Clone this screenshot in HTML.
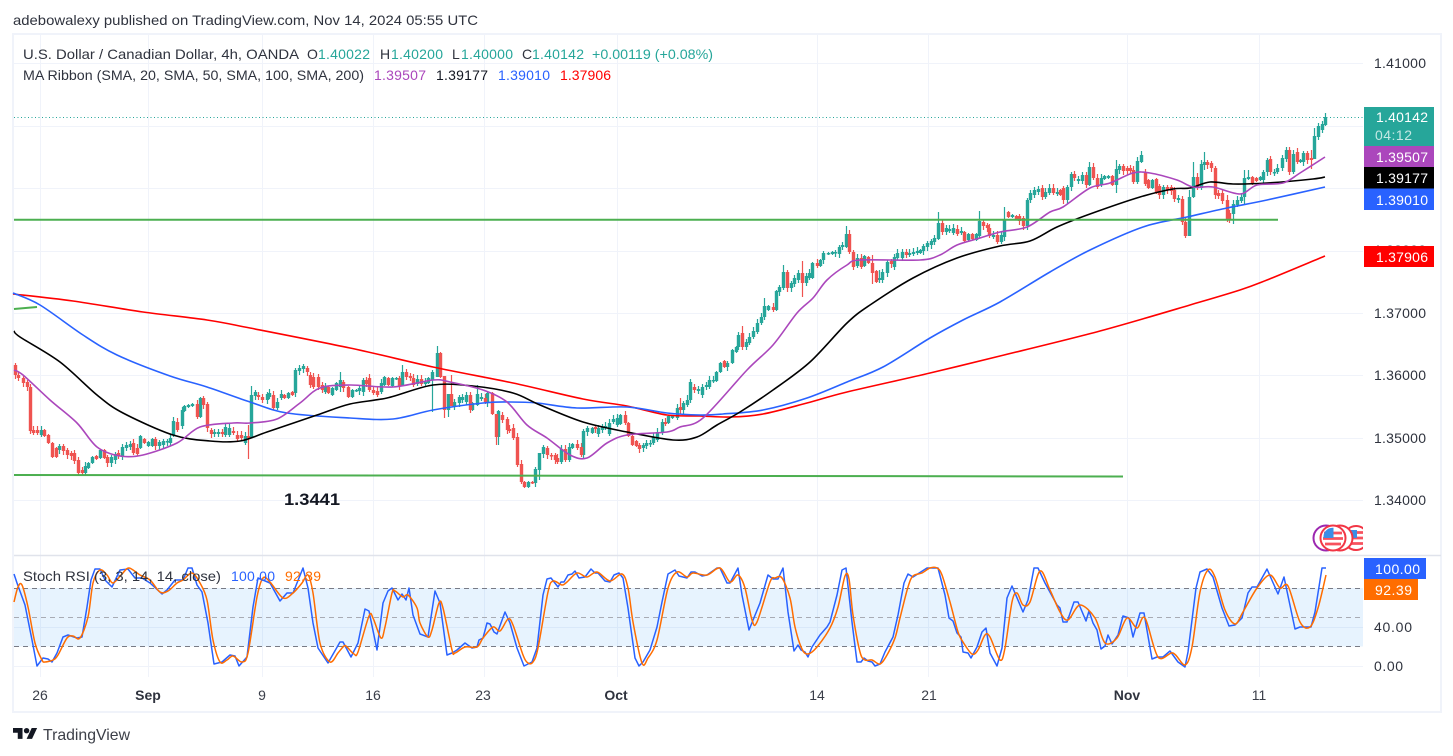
<!DOCTYPE html>
<html><head><meta charset="utf-8"><title>USD/CAD chart</title>
<style>
html,body{margin:0;padding:0;background:#fff;width:1453px;height:756px;overflow:hidden}
svg{display:block;font-family:"Liberation Sans",Arial,sans-serif}
text{font-size:14px;fill:#2f333e}
.w{fill:#fff}
.ax{fill:#3a3e49;text-anchor:middle}
.ma{fill:none;stroke-width:1.6;stroke-linejoin:round}
.st{fill:none;stroke-width:1.5;stroke-linejoin:round}
</style></head><body>
<svg id="c" width="1453" height="756" viewBox="0 0 1453 756" xmlns="http://www.w3.org/2000/svg">
<defs><clipPath id="fc"><rect x="1300" y="520" width="63" height="35"/></clipPath></defs>
<rect width="1453" height="756" fill="#fff"/>
<text x="13" y="25" textLength="465" lengthAdjust="spacingAndGlyphs">adebowalexy published on TradingView.com, Nov 14, 2024 05:55 UTC</text>
<!-- frame -->
<rect x="13" y="34" width="1428" height="678" fill="none" stroke="#f0f3fa" stroke-width="2"/>
<!-- grid -->
<path d="M14 63.5H1363M14 126.5H1363M14 188.5H1363M14 251.5H1363M14 313.5H1363M14 375.5H1363M14 438.5H1363M14 500.5H1363M14 627.5H1363M14 666.5H1363M40.5 35V677M148.5 35V677M262.5 35V677M373.5 35V677M484.5 35V677M617.5 35V677M817.5 35V677M928.5 35V677M1127.5 35V677M1259.5 35V677" stroke="#f0f3fa" fill="none"/>
<path d="M14 555.5H1441" stroke="#e0e3eb" stroke-width="1.5"/>
<!-- stoch band -->
<rect x="14" y="588" width="1349" height="58.5" fill="#2196f3" fill-opacity=".11"/>
<path d="M14 588.5H1363M14 646.5H1363" stroke="#787b86" stroke-dasharray="5 4" fill="none"/>
<path d="M14 617.5H1363" stroke="#a8abb4" stroke-dasharray="5 4" fill="none"/>
<!-- candles -->
<g id="candles"></g>
<!-- MAs -->
<polyline class="ma sm" stroke="#ff0000" points="13,294 73,301 143,312 207,320 250,328 350,348 433,367 513,383 583,399 627,406 667,415 700,416 730,417 763,414 807,403 847,392 930,373 1000,356 1100,331 1190,305 1240,290 1267,280 1325,256"/>
<polyline class="ma sm" stroke="#2962ff" points="13,293 40,305 83,335 117,355 170,376 207,387 250,402 287,413 350,418 393,419 433,410 483,403 510,402 537,403 577,408 627,407 667,413 700,415 723,414 763,410 807,398 847,382 883,367 930,338 963,320 1000,302 1050,272 1090,250 1143,227 1187,217 1227,208 1267,200 1325,187"/>
<polyline class="ma sm" stroke="#000" points="14,331 20,337 60,362 97,395 123,413 173,435 210,441 240,441 267,432 317,415 350,404 387,398 433,385 473,386 513,393 540,405 583,422 627,432 673,440 697,437 717,425 740,412 773,390 810,362 847,323 870,305 913,278 957,258 1000,246 1030,241 1057,227 1090,214 1140,197 1173,189 1190,188 1210,182 1233,184 1267,183 1313,179 1325,177"/>
<polyline class="ma sm" stroke="#ab47bc" points="14,370 23,375 50,400 77,423 97,447 120,456 143,455 177,443 200,427 233,423 250,423 277,419 300,403 320,388 350,385 393,387 433,380 450,382 483,390 507,402 527,425 547,438 570,455 587,458 607,443 627,435 667,432 680,427 703,418 747,370 773,345 797,313 813,298 827,280 847,265 860,260 920,260 940,255 957,245 980,238 1000,232 1027,227 1050,212 1063,207 1090,188 1110,183 1133,173 1150,173 1177,180 1193,187 1213,187 1240,194 1257,185 1283,183 1300,173 1325,157"/>
<!-- trend lines -->
<path d="M14 219.7H1278M14 475L1123 476.5M14 309L37 307" stroke="#4caf50" stroke-width="2" fill="none"/>
<path d="M14 117.5H1363" stroke="#26a69a" stroke-dasharray="1 2.5" fill="none"/>
<text x="284" y="505" textLength="56" lengthAdjust="spacingAndGlyphs" style="font-size:17px;font-weight:bold;fill:#131722">1.3441</text>
<!-- stoch lines -->
<polyline class="st" stroke="#2962ff" points="14,574 17,583 25,605 32,640 37,666 43,658 48,659 52,662 57,653 63,637 68,635 77,638 82,637 87,607 91,580 95,569 100,569 105,580 112,587 120,570 128,569 135,578 142,578 150,583 162,594 167,590 175,580 183,580 188,568 192,568 197,585 202,592 208,623 214,664 222,662 230,655 235,656 239,666 247,657 253,607 258,578 270,583 280,601 287,593 293,593 303,568 308,588 313,623 318,648 328,663 340,642 343,642 351,657 358,643 365,609 369,611 377,650 383,603 388,591 392,588 398,600 402,594 406,600 409,588 413,615 420,634 428,637 435,591 440,603 447,655 452,653 457,650 465,643 472,648 477,647 479,640 483,638 487,623 490,624 494,632 497,634 505,612 510,623 517,648 524,666 532,662 537,648 543,595 547,579 551,578 558,587 561,582 564,582 568,575 572,574 575,571 579,578 585,577 591,569 595,573 598,573 605,581 610,582 614,575 619,573 623,578 628,608 635,658 639,666 643,662 650,650 657,627 662,602 668,574 675,570 679,576 687,578 691,572 695,572 702,576 707,575 717,568 720,568 727,583 730,583 738,568 742,595 749,630 760,603 768,575 773,579 778,579 783,568 788,612 794,651 798,645 801,650 805,652 808,657 812,647 820,635 827,627 830,622 837,595 842,570 846,568 852,622 857,662 861,662 864,658 868,661 872,662 875,666 880,664 885,652 893,637 898,615 904,583 908,574 913,577 927,568 938,568 945,595 949,618 953,621 957,633 961,637 963,652 968,653 971,658 977,647 982,632 986,628 990,653 997,666 1002,648 1007,598 1012,586 1023,612 1028,600 1034,568 1038,568 1045,583 1057,605 1060,608 1063,622 1067,622 1074,602 1078,602 1086,621 1089,611 1093,623 1097,630 1101,649 1105,646 1108,635 1112,644 1118,635 1123,616 1129,618 1133,637 1140,613 1144,613 1152,659 1157,657 1163,657 1170,651 1178,662 1185,667 1188,652 1196,588 1200,572 1207,569 1213,577 1222,608 1229,626 1235,625 1242,618 1248,593 1252,587 1257,587 1267,569 1278,594 1284,577 1295,629 1300,627 1311,627 1315,612 1322,568 1326,568"/>
<polyline class="st sm" stroke="#ff6d00" points="14,602 18,587 22,585 28,607 35,643 42,660 45,662 53,660 58,655 67,638 73,636 80,638 88,617 93,583 100,570 107,575 113,583 122,574 129,568 140,575 150,580 160,592 168,591 177,583 183,580 192,573 200,583 207,600 213,640 220,662 227,660 233,656 242,662 248,653 257,597 263,578 270,582 283,598 293,593 302,583 308,575 313,593 320,643 330,662 338,653 344,646 347,647 354,654 358,652 369,616 373,618 381,638 385,627 392,593 395,591 403,597 408,595 417,608 420,623 428,637 432,630 439,603 443,608 452,650 455,653 465,647 477,647 483,638 493,627 500,631 508,619 513,625 523,655 528,663 533,662 538,648 548,592 553,581 562,585 567,582 577,573 587,577 597,572 610,581 622,574 628,588 633,622 642,663 648,658 657,640 668,588 677,572 687,577 693,573 707,575 720,568 730,582 738,575 745,588 752,620 757,622 770,582 775,578 782,578 790,598 795,627 802,649 808,654 817,647 830,628 838,607 845,576 849,579 853,615 860,652 865,660 872,660 880,664 887,655 895,638 900,618 908,587 913,576 922,573 930,568 937,568 942,575 950,602 958,632 963,642 972,654 978,650 985,635 990,637 1000,660 1005,648 1012,602 1017,593 1023,605 1030,602 1040,571 1050,590 1060,612 1068,620 1080,605 1095,618 1105,643 1117,638 1127,618 1137,628 1145,618 1158,657 1173,653 1185,665 1192,647 1200,592 1208,570 1215,577 1225,610 1235,624 1243,612 1257,588 1270,575 1280,588 1288,586 1300,622 1310,627 1318,608 1326,575"/>
<!-- legends -->
<text x="23" y="59" textLength="276" lengthAdjust="spacingAndGlyphs">U.S. Dollar / Canadian Dollar, 4h, OANDA</text>
<text x="307" y="59">O</text><text x="318" y="59" textLength="52" style="fill:#26a69a">1.40022</text>
<text x="380" y="59">H</text><text x="391" y="59" textLength="52" style="fill:#26a69a">1.40200</text>
<text x="452" y="59">L</text><text x="461" y="59" textLength="52" style="fill:#26a69a">1.40000</text>
<text x="522" y="59">C</text><text x="532" y="59" textLength="52" style="fill:#26a69a">1.40142</text>
<text x="592" y="59" textLength="121" lengthAdjust="spacingAndGlyphs" style="fill:#26a69a">+0.00119 (+0.08%)</text>
<text x="23" y="80" textLength="341" lengthAdjust="spacingAndGlyphs">MA Ribbon (SMA, 20, SMA, 50, SMA, 100, SMA, 200)</text>
<text x="374" y="80" textLength="52" style="fill:#ab47bc">1.39507</text>
<text x="436" y="80" textLength="52" style="fill:#131722">1.39177</text>
<text x="498" y="80" textLength="52" style="fill:#2962ff">1.39010</text>
<text x="560" y="80" textLength="51" style="fill:#ff0000">1.37906</text>
<text x="23" y="581" textLength="198" lengthAdjust="spacingAndGlyphs">Stoch RSI (3, 3, 14, 14, close)</text>
<text x="231" y="581" textLength="44" style="fill:#2962ff">100.00</text>
<text x="285" y="581" textLength="36" style="fill:#ff6d00">92.39</text>
<!-- axis -->
<g class="axr">
<text x="1374" y="68" textLength="52">1.41000</text>
<text x="1374" y="131" textLength="52">1.40000</text>
<text x="1374" y="193" textLength="52">1.39000</text>
<text x="1374" y="255" textLength="52">1.38000</text>
<text x="1374" y="318" textLength="52">1.37000</text>
<text x="1374" y="380" textLength="52">1.36000</text>
<text x="1374" y="443" textLength="52">1.35000</text>
<text x="1374" y="505" textLength="52">1.34000</text>
<text x="1374" y="632" textLength="38">40.00</text>
<text x="1374" y="671" textLength="29">0.00</text>
</g>
<rect x="1364" y="107" width="70" height="39" fill="#26a69a"/>
<text class="w" x="1376" y="122" textLength="52" style="fill:#fff">1.40142</text>
<text x="1375" y="140" textLength="37" style="fill:#c4e8e4">04:12</text>
<rect x="1364" y="146" width="70" height="21" fill="#ab47bc"/>
<text x="1376" y="162" textLength="52" style="fill:#fff">1.39507</text>
<rect x="1364" y="167" width="70" height="21.5" fill="#000"/>
<text x="1376" y="183" textLength="52" style="fill:#fff">1.39177</text>
<rect x="1364" y="188.5" width="70" height="21.5" fill="#2962ff"/>
<text x="1376" y="205" textLength="52" style="fill:#fff">1.39010</text>
<rect x="1364" y="246" width="70" height="21" fill="#ff0000"/>
<text x="1376" y="262" textLength="52" style="fill:#fff">1.37906</text>
<rect x="1364" y="558" width="62" height="21" fill="#2962ff"/>
<text x="1375" y="574" textLength="45" style="fill:#fff">100.00</text>
<rect x="1364" y="579" width="54" height="21" fill="#ff6d00"/>
<text x="1375" y="595" textLength="37" style="fill:#fff">92.39</text>
<g class="tm">
<text class="ax" x="40" y="700">26</text>
<text class="ax" x="148" y="700" style="font-weight:bold;fill:#2f333e">Sep</text>
<text class="ax" x="262" y="700">9</text>
<text class="ax" x="373" y="700">16</text>
<text class="ax" x="483" y="700">23</text>
<text class="ax" x="616" y="700" style="font-weight:bold;fill:#2f333e">Oct</text>
<text class="ax" x="817" y="700">14</text>
<text class="ax" x="929" y="700">21</text>
<text class="ax" x="1127" y="700" style="font-weight:bold;fill:#2f333e">Nov</text>
<text class="ax" x="1259" y="700">11</text>
</g>
<!-- flags -->
<g clip-path="url(#fc)">
<circle cx="1326" cy="538" r="12.5" fill="#fff" stroke="#9c27b0" stroke-width="2"/>
<circle cx="1356" cy="538" r="12" fill="#fff" stroke="#f23645" stroke-width="2"/>
<path d="M1346 532.5h20M1346 538h20M1346 543.5h20" stroke="#f7525f" stroke-width="2.8"/>
<rect x="1350" y="530" width="7" height="8" fill="#3a8ee6"/>
<circle cx="1340" cy="538" r="12.5" fill="#fff" stroke="#f23645" stroke-width="2"/>
<circle cx="1333" cy="538" r="12.5" fill="#fff" stroke="#f23645" stroke-width="2"/>
<path d="M1324 533h18M1323 538.5h20M1325 544h16" stroke="#f7525f" stroke-width="2.8"/>
<path d="M1325.5 531a10 10 0 0 1 8-3.2V538h-10a10 10 0 0 1 2-7z" fill="#3a8ee6"/>
</g>
<!-- logo -->
<g transform="translate(13 723.9) scale(.68)" fill="#131722"><path d="M14 6H0v7h7v9h7V6zM28 22h-8l7.5-16h8L28 22z"/><circle cx="20" cy="10" r="4"/></g>
<text x="43" y="740" textLength="87" lengthAdjust="spacingAndGlyphs" style="font-size:16px;fill:#3d4049">TradingView</text>
</svg>
<script>
var d="r15 365 375,r18 375 378,r23 378 383,r27 382 387,r30 387 431,r33 430 433,r37 430 433,g41 430 435,r44 430 436,r48 435 443,r52 443 457,r56 448 457,g59 446 450,r63 446 451,r67 450 455,r71 453 456,r74 453 461,r78 460 473,r82 470 473,g85 466 473,g88 463 468,g92 457 463,r96 456 459,g100 450 458,r104 450 458,r107 457 463,g111 457 463,g115 454 460,r118 453 456,g122 447 457,g126 445 448,g130 444 447,r133 443 453,r137 448 454,g140 436 448,r144 439 443,g148 442 446,g152 439 446,r155 439 446,g159 442 446,g163 441 445,g167 441 442,g170 438 443,g173 421 435,r177 422 430,g182 410 426,g184 406 411,g188 405 407,g192 404 406,r197 404 417,g200 398 417,r203 398 405,r207 404 428,r211 430 434,g214 432 434,g218 432 434,r222 432 434,g225 427 435,g229 428 435,r233 431 433,r237 435 439,r241 435 438,g245 436 443,r248 436 438,g251 395 438,g255 392 396,r258 395 397,r262 397 400,g267 394 400,g269 393 397,r273 395 408,g277 402 408,g281 394 398,r284 395 398,g288 393 398,r292 392 395,g295 370 393,g299 368 371,g303 366 369,r307 368 372,r310 375 385,r313 377 387,r318 377 387,r322 385 390,g325 387 392,r328 387 393,g332 388 395,g336 383 390,g340 380 387,r343 382 388,r348 387 397,g352 390 397,g356 390 391,g359 388 391,g363 380 392,r366 380 384,r369 378 390,r373 390 393,r377 391 395,g381 383 392,g384 377 385,r388 378 385,g392 378 386,g396 378 379,r399 378 386,g402 372 386,r406 372 377,r410 376 378,r413 378 385,g417 379 384,r421 379 384,g425 382 384,g428 378 383,g432 372 380,g437 353 377,r440 353 377,r444 376 410,g448 394 410,r451 394 406,g454 402 407,g459 397 403,g462 397 400,g466 395 402,r470 395 410,g472 403 410,g477 394 405,g481 397 399,r485 398 402,g487 393 403,r492 393 414,r496 414 437,g498 411 437,r502 415 420,r507 419 430,r509 429 431,r513 428 438,r517 437 465,r521 464 482,r524 482 487,g528 482 487,r532 482 483,g535 469 483,g539 453 470,g543 447 454,r547 448 455,r551 455 456,r555 455 460,r557 458 462,g561 449 462,r565 449 460,g569 447 460,g572 444 448,r577 444 448,r581 447 455,g583 431 455,g587 428 432,g592 428 433,r595 427 429,g598 428 434,g602 427 430,g605 426 428,g609 423 434,g613 419 422,g617 418 425,g620 415 424,r625 415 423,r628 423 436,r632 436 445,r636 441 446,r639 445 449,g643 445 448,g646 443 446,g650 443 444,g653 437 443,g657 432 440,g662 422 432,r665 422 424,g668 416 423,g672 416 418,g677 408 418,r680 407 410,g683 403 410,g687 400 405,g690 382 400,r694 387 390,g698 389 391,g702 387 395,g706 385 387,g709 380 387,g713 380 381,g716 372 381,g720 363 372,r724 361 367,g727 363 367,g732 350 363,g736 347 352,g738 335 347,r742 333 347,g746 342 347,g749 337 343,g753 331 337,g757 323 332,g761 317 323,g764 306 317,g768 306 310,r773 307 310,g776 291 310,g779 287 292,g783 272 288,r787 272 288,g791 283 288,g794 278 284,g798 273 280,r802 273 283,g806 276 283,g809 273 278,g812 263 278,r817 263 266,g820 260 266,g823 253 260,g828 253 254,g832 252 254,g835 252 253,g839 247 254,g842 245 247,g846 234 247,r849 234 252,r853 252 267,g857 258 266,r861 258 267,g864 256 266,r868 257 263,r872 263 273,r876 271 282,g879 278 280,g882 272 280,g887 262 273,r891 261 264,g894 257 267,g897 253 258,g902 252 258,r906 252 255,g909 253 255,g913 252 254,g917 251 253,g920 250 253,g923 246 251,g927 243 247,g931 241 245,g934 238 242,g938 223 239,r942 223 232,g946 228 232,g949 229 231,g953 228 233,r957 229 234,g961 231 233,r964 232 241,g968 234 240,r972 234 239,g976 234 240,g979 221 236,r983 222 226,r987 225 228,r989 228 236,g993 235 237,r997 235 242,g1001 235 242,g1004 220 237,r1008 212 217,g1012 215 217,r1016 216 219,r1019 216 221,r1023 218 226,g1027 200 226,g1030 193 200,g1034 190 195,g1038 189 192,r1042 188 197,g1045 192 197,g1049 188 193,r1053 188 193,g1057 192 194,r1060 190 195,r1063 188 200,g1067 187 200,g1071 174 187,r1074 174 178,g1078 179 181,g1082 175 181,r1086 175 185,g1089 167 185,r1093 167 178,r1097 178 187,g1101 178 185,g1104 176 179,g1108 176 178,r1112 176 185,g1116 169 185,g1119 166 170,r1123 166 171,r1127 168 171,r1130 168 171,r1133 170 182,g1137 161 182,g1141 155 162,r1145 173 184,r1148 180 188,g1152 180 188,r1156 179 193,r1159 186 195,g1163 187 195,r1167 187 190,r1171 187 191,r1174 190 199,g1178 198 200,r1182 199 222,r1185 222 236,g1189 197 236,g1193 177 197,r1197 177 188,g1201 164 188,g1204 162 165,r1207 162 165,r1211 163 168,r1215 168 195,r1218 193 196,r1222 193 201,r1227 200 220,r1229 213 220,g1233 204 214,g1237 200 205,g1241 197 201,g1244 178 197,g1248 177 179,r1252 177 184,r1256 178 181,g1260 177 180,g1263 172 180,g1267 160 172,r1270 159 172,g1274 172 173,g1277 168 172,g1282 158 168,g1286 150 159,r1289 150 172,g1293 154 172,r1297 152 162,g1300 160 162,g1303 153 162,r1307 153 160,r1311 158 160,g1314 136 159,g1318 126 137,g1322 124 130,g1325 117 125";
var W={248:[425,459],251:[386,438],299:[365,375],317:[361,395],340:[372,392],402:[365,386],432:[370,412],437:[346,377],444:[376,418],448:[394,417],451:[375,406],477:[385,406],496:[414,445],498:[410,445],539:[453,480],573:[441,450],680:[398,414],687:[395,407],742:[326,350],764:[298,320],783:[265,290],802:[261,297],846:[226,248],853:[250,270],872:[255,284],879:[270,283],938:[212,240],979:[211,238],1004:[207,241],1089:[162,186],1116:[160,193],1141:[151,163],1189:[190,236],1204:[152,170],1193:[162,198],1227:[195,222],1229:[210,223],1233:[200,224],1244:[170,205],1248:[170,180],1289:[147,175],1311:[150,169],1314:[128,159],1325:[113,126]};
var g="",r="",gb="",rb="";
d.split(",").forEach(function(s){var k=s[0],p=s.slice(1).split(" ").map(Number),x=p[0]+.5,t=p[1],b=p[2],h=t-1-(p[0]*7%4),l=b+1+(p[0]*5%4),w=W[p[0]];if(w){h=w[0];l=w[1]}
var a="M"+x+" "+h+"V"+l,c="M"+x+" "+t+"V"+Math.max(b,t+1.5);if(k=="g"){g+=a;gb+=c}else{r+=a;rb+=c}});
document.getElementById("candles").innerHTML='<path d="'+g+'" stroke="#26a69a" stroke-width="1.2" fill="none"/><path d="'+r+'" stroke="#ef5350" stroke-width="1.2" fill="none"/><path d="'+gb+'" stroke="#26a69a" stroke-width="3.4" fill="none"/><path d="'+rb+'" stroke="#ef5350" stroke-width="3.4" fill="none"/>';
/* smooth the moving-average curves (Catmull-Rom to Bezier) */
[].slice.call(document.querySelectorAll("polyline.sm")).forEach(function(el){
var P=el.getAttribute("points").trim().split(/\s+/).map(function(q){return q.split(",").map(Number)});
var s="M"+P[0][0]+" "+P[0][1];
for(var i=0;i<P.length-1;i++){var a=P[Math.max(i-1,0)],b=P[i],c=P[i+1],e=P[Math.min(i+2,P.length-1)];
var t=.16;
s+="C"+(b[0]+(c[0]-a[0])*t).toFixed(1)+" "+(b[1]+(c[1]-a[1])*t).toFixed(1)+" "+(c[0]-(e[0]-b[0])*t).toFixed(1)+" "+(c[1]-(e[1]-b[1])*t).toFixed(1)+" "+c[0]+" "+c[1];}
var n=document.createElementNS("http://www.w3.org/2000/svg","path");
n.setAttribute("d",s);n.setAttribute("class",el.getAttribute("class"));n.setAttribute("stroke",el.getAttribute("stroke"));
el.parentNode.replaceChild(n,el);});
</script>
</body></html>
